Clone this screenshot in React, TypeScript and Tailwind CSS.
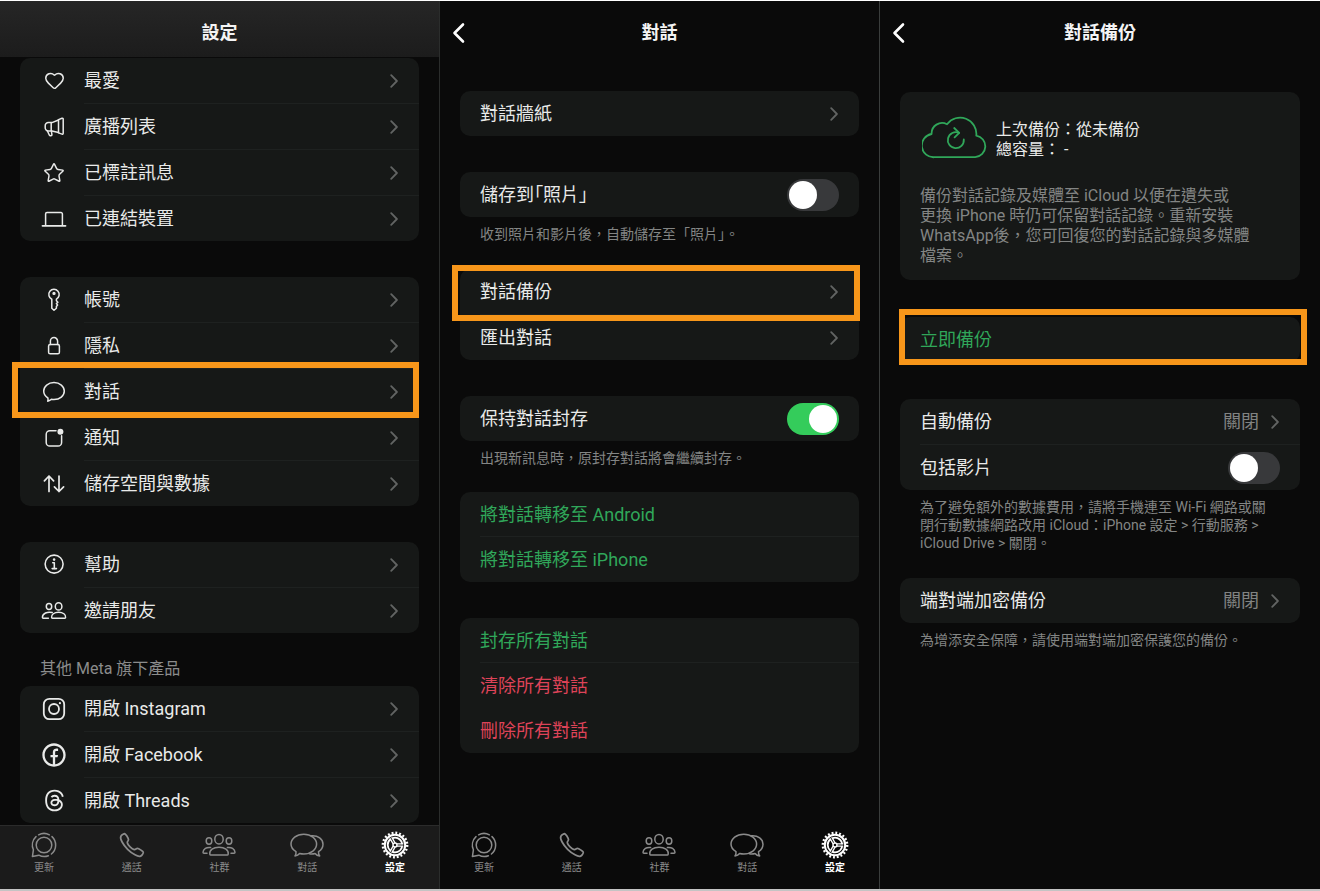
import React from 'react';
import { Heart, Star } from 'lucide-react';
import { IoCallOutline, IoInformationCircleOutline } from 'react-icons/io5';
import { RiFacebookCircleLine } from 'react-icons/ri';
import { FaThreads } from 'react-icons/fa6';

/* ---------- icons ---------- */

interface SvgProps {
  w: number;
  h: number;
  sw?: number;
  children: React.ReactNode;
}

const Svg: React.FC<SvgProps> = ({ w, h, sw = 1.5, children }) => (
  <svg
    width={w}
    height={h}
    viewBox={`0 0 ${w} ${h}`}
    fill="none"
    stroke="currentColor"
    strokeWidth={sw}
    strokeLinecap="round"
    strokeLinejoin="round"
    aria-hidden="true"
  >
    {children}
  </svg>
);

const MegaphoneIcon = () => (
  <Svg w={24} h={24}>
    <path d="M16.5 4.6 20 3.2c.7-.2 1.2.1 1.2.8v14.3c0 .7-.5 1-1.2.8l-3.5-1.2z" />
    <path d="M16.5 5 10 7.6H6.4A3.2 3.2 0 0 0 3.2 11v1.6A3.2 3.2 0 0 0 6.4 16H10l6.5 1.6" />
    <path d="M9.2 7.8v8M5.4 16l2 4.2c.5.9 2.6.6 2.5-.5L9.4 16" />
  </Svg>
);

const LaptopIcon = () => (
  <Svg w={26} h={20}>
    <path d="M4.6 16V5a1.4 1.4 0 0 1 1.4-1.4h14A1.4 1.4 0 0 1 21.4 5v11" />
    <path d="M1.5 16.8h23" strokeWidth={1.8} />
  </Svg>
);

const KeyIcon = () => (
  <Svg w={24} h={24}>
    <path d="M9.8 11.2a5.2 5.2 0 1 1 4.6-.1v1.7l1.5 1.4-1.5 1.4 1.2 1.4-1.2 1.5v1.7L12 22.3l-2.2-2z" />
    <circle cx="12" cy="5.4" r=".9" fill="currentColor" />
  </Svg>
);

const LockIcon = () => (
  <Svg w={24} h={24}>
    <rect x="6.6" y="10.4" width="10.8" height="9.4" rx="1.6" />
    <path d="M8.4 10.4V7.2a3.6 3.6 0 0 1 7.2 0v3.2" />
  </Svg>
);

const BubbleIcon = () => (
  <Svg w={24} h={24}>
    <path d="M12 2.6c5.8 0 10.3 3.7 10.3 8.5s-4.5 8.4-10.3 8.4c-.9 0-1.8-.1-2.6-.2-1 1-2.3 1.6-3.7 1.9.4-1 .5-2.2.2-3.2C3.4 16.5 1.7 14 1.7 11.1c0-4.8 4.5-8.5 10.3-8.5z" />
  </Svg>
);

const NotifyIcon = () => (
  <Svg w={24} h={24}>
    <path d="M14 4.8H7.8A3.6 3.6 0 0 0 4.2 8.4v8A3.6 3.6 0 0 0 7.8 20h8.2a3.6 3.6 0 0 0 3.6-3.6v-6.6" />
    <circle cx="18.4" cy="5.8" r="3" fill="currentColor" stroke="none" />
  </Svg>
);

const ArrowsIcon = () => (
  <Svg w={24} h={24} sw={1.7}>
    <path d="M7 19.5V4M2.4 8.8 7 4l4.6 4.8" />
    <path d="M17 4v15.5M12.4 14.8l4.6 4.7 4.6-4.7" />
  </Svg>
);

const FriendsIcon = () => (
  <Svg w={26} h={20}>
    <ellipse cx="8" cy="5.6" rx="2.7" ry="3" />
    <ellipse cx="17.6" cy="5.4" rx="3.3" ry="3.6" />
    <path d="M10.6 16.6c-.6-3 2.7-5.4 7-5.4s7.6 2.4 7 5.4c0 .4-.3.6-.8.6H11.4c-.5 0-.8-.2-.8-.6z" />
    <path d="M11.2 11.5c-5-1.2-9.6 1-9.8 4.8 0 .6.3.9.8.9h5.2" />
  </Svg>
);

const InstagramIcon = () => (
  <Svg w={24} h={24} sw={1.8}>
    <rect x="1.8" y="1.8" width="20.4" height="20.4" rx="5.6" />
    <circle cx="12" cy="12" r="5" />
    <circle cx="17.9" cy="6.2" r="1.1" fill="currentColor" stroke="none" />
  </Svg>
);

const UpdatesIcon = () => (
  <Svg w={28} h={28}>
    <circle cx="14" cy="14" r="7.8" />
    <path d="M8.6 3.8a11.6 11.6 0 0 1 10.8 0" />
    <path d="M22 5.6a11.600 11.600 0 0 1-.6 17.400" />
    <path d="M6 5.600A11.600 11.600 0 0 0 3.400 18.800L2.400 25.600l6.400-1.400a11.600 11.600 0 0 0 9.600.600" />
  </Svg>
);

const CommunityIcon = () => (
  <Svg w={34} h={28}>
    <ellipse cx="17" cy="8.2" rx="4.2" ry="4.8" />
    <ellipse cx="7" cy="10" rx="2.8" ry="3.2" />
    <ellipse cx="27" cy="10" rx="2.8" ry="3.2" />
    <path d="M7.8 23.2c-.6-4 3.4-7 9.2-7s9.800 3 9.200 7c-.1.600-.5.900-1 .9H8.8c-.5 0-.9-.3-1-.9z" />
    <path d="M8.6 16.500c-4-.6-7.400 1.300-7.600 4.800 0 .6.3 1 .9 1H5M25.400 16.500c4-.6 7.400 1.300 7.600 4.800 0 .6-.3 1-.9 1H29" />
  </Svg>
);

const ChatsIcon = () => (
  <Svg w={36} h={28}>
    <path d="M14.800 3.200c7.300 0 12.800 4.300 12.800 9.900S22 23 14.800 23c-1.500 0-2.900-.2-4.200-.5-1.200 1.500-2.700 2.200-4.600 2.500.9-1.300 1.200-2.700 1-4.300-3.100-1.800-5-4.500-5-7.600 0-5.600 5.500-9.900 12.800-9.900z" />
    <path d="M22.500 4.800c6.500-.5 11.500 3.200 11.500 8.400 0 3-1.700 5.700-4.500 7.500-.1 1.500.2 2.900 1.200 4.300-1.900-.2-3.400-1-4.600-2.500-1.700.5-3.800.6-5.600.3" />
  </Svg>
);

const GearIcon = () => (
  <Svg w={28} h={28}>
    <circle cx="14" cy="14" r="12.200" strokeWidth={2.400} strokeLinecap="butt" strokeDasharray="1.900 1.933" />
    <circle cx="14" cy="14" r="10.200" strokeWidth={2} />
    <circle cx="14" cy="14" r="7.300" strokeWidth={1.800} strokeLinecap="butt" strokeDasharray="12.700 2.588" strokeDashoffset="-1.300" />
    <circle cx="14" cy="14" r="2" strokeWidth={1.400} />
    <path d="M16.200 12.900h5.600M16.200 15.100h5.600M13.900 11.600l-2.900-5M12 12.700l-2.900-5M13.900 16.400l-2.900 5M12 15.300l-2.900 5" strokeWidth={1.300} />
  </Svg>
);

const CloudIcon = () => (
  <svg width="66" height="46" viewBox="0 0 66 46" fill="none" stroke="currentColor" strokeWidth="1.8" strokeLinecap="round" strokeLinejoin="round" aria-hidden="true">
    <path d="M12.500 43.200A11.700 11.700 0 0 1 9.600 20A10.500 10.500 0 0 1 25 10.200A16.300 16.300 0 0 1 54.300 21.600A10.900 10.900 0 0 1 53.200 43.200z" />
    <path d="M41.800 25.500a8 8 0 1 1-4.800-6.700" />
    <path d="M32.200 14l5 4.800-4.600 4.600" />
  </svg>
);

const Chevron = () => (
  <svg width="8" height="14" viewBox="0 0 8 14" fill="none" stroke="currentColor" strokeWidth="1.8" strokeLinecap="round" strokeLinejoin="round" className="shrink-0 text-[#626463]" aria-hidden="true">
    <path d="M1.200 1.200 6.900 7l-5.700 5.800" />
  </svg>
);

/* ---------- shared parts ---------- */

const Card: React.FC<{ children: React.ReactNode }> = ({ children }) => (
  <div className="rounded-[10px] bg-[#161817]">{children}</div>
);

// 橘色標示框
const Highlight: React.FC<{ className: string }> = ({ className }) => (
  <span className={`pointer-events-none absolute z-10 border-6 border-[#f7961a] ${className}`} />
);

interface RowProps {
  label: string;
  icon?: React.ReactNode;
  value?: string;
  arrow?: boolean;
  tone?: string;
  mark?: string;
}

const Row: React.FC<RowProps> = ({ label, icon, value, arrow = true, tone = 'text-[#e9eae9]', mark }) => (
  <button type="button" className={`relative flex h-[45px] w-full items-center gap-4 pr-[21px] pl-5 text-left text-lg ${tone}`}>
    {icon && <span className="flex w-7 shrink-0 justify-center">{icon}</span>}
    <span className="flex-1">{label}</span>
    {value && <span className="-mr-1 text-[#818382]">{value}</span>}
    {arrow && <Chevron />}
    {mark && <Highlight className={mark} />}
  </button>
);

const ToggleRow: React.FC<{ label: string; on?: boolean }> = ({ label, on = false }) => (
  <label className="flex h-[45px] items-center justify-between px-5 text-lg text-[#e9eae9]">
    <span className="[font-feature-settings:'palt']">{label}</span>
    <input
      type="checkbox"
      defaultChecked={on}
      className="h-8 w-[52px] appearance-none rounded-full bg-[#38393b] p-0.5 before:block before:size-7 before:rounded-full before:bg-white checked:bg-[#34cc5b] checked:before:translate-x-5"
    />
  </label>
);

const Divider: React.FC<{ className?: string }> = ({ className = 'ml-5' }) => <div className={`h-px bg-[#1e2120] ${className}`} />;

const Note: React.FC<{ children: React.ReactNode }> = ({ children }) => (
  <p className="mt-2 px-5 text-sm leading-[18px] whitespace-nowrap text-[#838584]">{children}</p>
);

const Header: React.FC<{ title: string; back?: boolean; className?: string }> = ({ title, back, className = '' }) => (
  <header className={`relative flex h-14 shrink-0 items-center justify-center pt-2 ${className}`}>
    {back && (
      <button type="button" aria-label="返回" className="absolute top-[21px] left-3 text-white">
        <svg width="14" height="22" viewBox="0 0 14 22" fill="none" stroke="currentColor" strokeWidth="2.6" strokeLinecap="round" strokeLinejoin="round">
          <path d="M11 2.500 2.500 11l8.500 8.500" />
        </svg>
      </button>
    )}
    <h1 className="text-lg font-bold text-[#f4f4f4]">{title}</h1>
  </header>
);

const tabs = [
  { label: '更新', icon: <UpdatesIcon /> },
  { label: '通話', icon: <IoCallOutline size={28} /> },
  { label: '社群', icon: <CommunityIcon /> },
  { label: '對話', icon: <ChatsIcon /> },
  { label: '設定', icon: <GearIcon />, active: true },
];

const TabBar: React.FC<{ className?: string }> = ({ className = 'border-transparent' }) => (
  <nav className={`mt-auto grid h-16 shrink-0 grid-cols-5 border-t pt-[5px] ${className}`}>
    {tabs.map((tab) => (
      <a
        key={tab.label}
        href="#"
        className={`flex flex-col items-center gap-0.5 text-[10px] leading-[14px] ${tab.active ? 'font-bold text-white' : 'text-[#8b8b8b]'}`}
      >
        {tab.icon}
        <span>{tab.label}</span>
      </a>
    ))}
  </nav>
);

/* ---------- screens ---------- */

const groups: RowProps[][] = [
  [
    { label: '最愛', icon: <Heart size={21} strokeWidth={1.7} /> },
    { label: '廣播列表', icon: <MegaphoneIcon /> },
    { label: '已標註訊息', icon: <Star size={22} strokeWidth={1.6} /> },
    { label: '已連結裝置', icon: <LaptopIcon /> },
  ],
  [
    { label: '帳號', icon: <KeyIcon /> },
    { label: '隱私', icon: <LockIcon /> },
    { label: '對話', icon: <BubbleIcon />, mark: '-top-[7px] -left-2 right-0 h-14' },
    { label: '通知', icon: <NotifyIcon /> },
    { label: '儲存空間與數據', icon: <ArrowsIcon /> },
  ],
  [
    { label: '幫助', icon: <IoInformationCircleOutline size={25} /> },
    { label: '邀請朋友', icon: <FriendsIcon /> },
  ],
];

const metaApps: RowProps[] = [
  { label: '開啟 Instagram', icon: <InstagramIcon /> },
  { label: '開啟 Facebook', icon: <RiFacebookCircleLine size={28} /> },
  { label: '開啟 Threads', icon: <FaThreads size={23} /> },
];

const RowGroup: React.FC<{ rows: RowProps[] }> = ({ rows }) => (
  <Card>
    {rows.map((row, i) => (
      <React.Fragment key={row.label}>
        {i > 0 && <Divider className="ml-16" />}
        <Row {...row} />
      </React.Fragment>
    ))}
  </Card>
);

const SettingsScreen = () => (
  <section className="flex flex-col border-r border-[#2b2d2c] bg-[#0a0a0a]">
    <Header title="設定" className="bg-linear-to-b from-[#262626] to-[#1c1c1c]" />
    <div className="px-5 pt-px pb-0.5">
      <div className="flex flex-col gap-9">
        {groups.map((rows) => (
          <RowGroup key={rows[0].label} rows={rows} />
        ))}
      </div>
      <h2 className="mt-6 mb-[5px] px-5 text-base text-[#8b8c8c]">其他 Meta 旗下產品</h2>
      <RowGroup rows={metaApps} />
    </div>
    <TabBar className="border-[#2b2b2b] bg-[#1b1b1b]" />
  </section>
);

const ChatsScreen = () => (
  <section className="flex flex-col border-r border-[#3a3d3c] bg-[#0a0a0a]">
    <Header title="對話" back />
    <div className="flex flex-col gap-9 px-5 pt-[34px]">
      <Card>
        <Row label="對話牆紙" />
      </Card>
      <div className="-mb-2.5">
        <Card>
          <ToggleRow label="儲存到「照片」" />
        </Card>
        <Note>收到照片和影片後，自動儲存至「照片」。</Note>
      </div>
      <Card>
        <Row label="對話備份" mark="-top-1 -left-2 -right-px h-14" />
        <Divider />
        <Row label="匯出對話" />
      </Card>
      <div className="-mb-[11px]">
        <Card>
          <ToggleRow label="保持對話封存" on />
        </Card>
        <Note>出現新訊息時，原封存對話將會繼續封存。</Note>
      </div>
      <Card>
        <Row label="將對話轉移至 Android" arrow={false} tone="text-[#30a75a]" />
        <Divider className="-mt-px ml-5" />
        <Row label="將對話轉移至 iPhone" arrow={false} tone="text-[#30a75a]" />
      </Card>
      <Card>
        <Row label="封存所有對話" arrow={false} tone="text-[#30a75a]" />
        <Divider className="-mt-px ml-5" />
        <Row label="清除所有對話" arrow={false} tone="text-[#dd4358]" />
        <Row label="刪除所有對話" arrow={false} tone="text-[#dd4358]" />
      </Card>
    </div>
    <TabBar />
  </section>
);

const BackupScreen = () => (
  <section className="flex flex-col bg-[#0a0a0a]">
    <Header title="對話備份" back />
    <div className="flex flex-col gap-[37px] px-5 pt-[35px]">
      <Card>
        <div className="px-5 pt-[22px] pb-3.5">
          <div className="flex items-end gap-2 pl-0.5 text-[#30a75a]">
            <CloudIcon />
            <p className="text-base leading-5 text-[#e9eae9]">
              上次備份：從未備份
              <br />
              總容量： -
            </p>
          </div>
          <p className="mt-[26px] text-base leading-5 whitespace-nowrap text-[#838584]">
            備份對話記錄及媒體至 iCloud 以便在遺失或
            <br />
            更換 iPhone 時仍可保留對話記錄。重新安裝
            <br />
            WhatsApp後，您可回復您的對話記錄與多媒體
            <br />
            檔案。
          </p>
        </div>
      </Card>
      <Card>
        <Row label="立即備份" arrow={false} tone="text-[#30a75a]" mark="-top-2 -left-px -right-[7px] h-14" />
      </Card>
      <div className="-mb-[11px]">
        <Card>
          <Row label="自動備份" value="關閉" />
          <Divider />
          <ToggleRow label="包括影片" />
        </Card>
        <Note>
          為了避免額外的數據費用，請將手機連至 Wi-Fi 網路或關
          <br />
          閉行動數據網路改用 iCloud：iPhone 設定 &gt; 行動服務 &gt;
          <br />
          iCloud Drive &gt; 關閉。
        </Note>
      </div>
      <div>
        <Card>
          <Row label="端對端加密備份" value="關閉" />
        </Card>
        <Note>為增添安全保障，請使用端對端加密保護您的備份。</Note>
      </div>
    </div>
  </section>
);

export default function App() {
  return (
    <main
      lang="zh-Hant"
      className="grid min-h-screen grid-cols-3 border-t border-b-2 border-t-white border-b-[#c4c4c4] font-['Roboto','Noto_Sans_CJK_TC',sans-serif]"
    >
      <SettingsScreen />
      <ChatsScreen />
      <BackupScreen />
    </main>
  );
}
